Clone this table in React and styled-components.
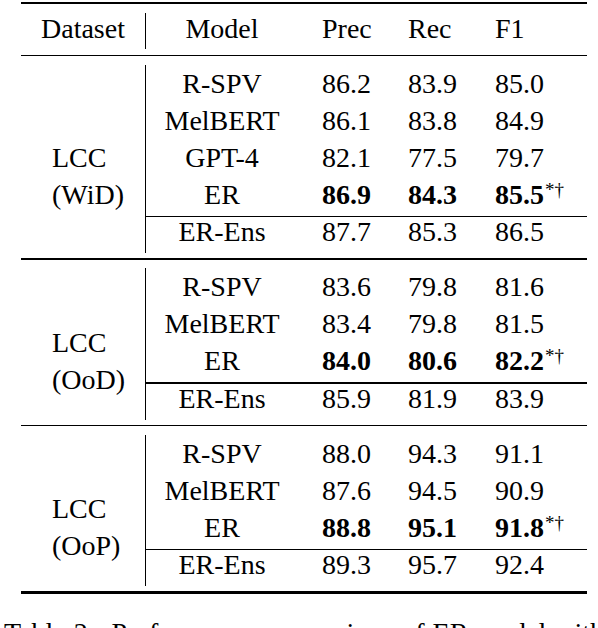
import React from "react";
import styled, { createGlobalStyle, css } from "styled-components";

const SERIF = `"Liberation Serif", Tinos, "Times New Roman", Times, serif`;

const serifText = css`
  font-family: ${SERIF};
  font-size: 28px;
  color: #000;
`;

const GlobalStyle = createGlobalStyle`
  html, body {
    margin: 0;
    padding: 0;
    overflow: hidden;
    background: #fff;
  }
  html body #root, html body #root * {
    font-family: ${SERIF};
  }
`;

const Page = styled.div`
  ${serifText};
  width: 598px;
  padding-top: 2px;
`;

const Table = styled.div`
  margin-left: 21px;
  width: 566px;
  display: flex;
  flex-direction: column;
`;

const Rule = styled.div`
  height: ${(p) => (p.$heavy ? "2.4px" : "1.5px")};
  background: #000;
`;

const Section = styled.div`
  display: grid;
  grid-template-columns: 125px 441px;
  padding: ${(p) => p.$top}px 0 ${(p) => p.$bottom}px;
`;

const LeftCell = styled.div`
  ${serifText};
  box-sizing: border-box;
  border-right: 1px solid #000;
`;

const HeaderLeft = styled(LeftCell)`
  line-height: 31px;
  padding-bottom: 5.6px;
  text-align: center;
`;

const LabelCell = styled(LeftCell)`
  padding-left: 31px;
  padding-top: ${(p) => p.$offset}px;
  line-height: 37px;
`;

const LabelLine = styled.div`
  ${serifText};
  white-space: nowrap;
`;

const Body = styled.div`
  display: flex;
  flex-direction: column;
  padding-bottom: ${(p) => p.$bottom || 0}px;
`;

const Row = styled.div`
  ${serifText};
  display: grid;
  grid-template-columns: 152px 86px 87px 116px;
  height: ${(p) => p.$lh + (p.$pb || 0)}px;
  line-height: ${(p) => p.$lh}px;
  padding-bottom: ${(p) => p.$pb || 0}px;
  box-sizing: border-box;
  white-space: nowrap;
`;

const ModelCell = styled.div`
  ${serifText};
  text-align: center;
`;

const NumCell = styled.div`
  ${serifText};
  padding-left: 24px;
`;

const Bold = styled.span`
  font-family: ${SERIF};
  font-weight: 700;
`;

const Sup = styled.span`
  font-family: ${SERIF};
  font-size: 19px;
  font-weight: 400;
  line-height: 0;
  vertical-align: 8px;
  margin-left: 1px;
`;

const CmidRule = styled.div`
  margin-top: 3px;
  height: 1.5px;
  background: #000;
`;

const Caption = styled.p`
  ${serifText};
  margin: 20px 0 0 4px;
  line-height: 37px;
  white-space: nowrap;
  word-spacing: 1px;
`;

const groups = [
  {
    label: ["LCC", "(WiD)"],
    offset: 74,
    rows: [
      ["R-SPV", "86.2", "83.9", "85.0"],
      ["MelBERT", "86.1", "83.8", "84.9"],
      ["GPT-4", "82.1", "77.5", "79.7"],
      ["ER", "86.9", "84.3", "85.5", true],
    ],
    ens: ["ER-Ens", "87.7", "85.3", "86.5"],
  },
  {
    label: ["LCC", "(OoD)"],
    offset: 55.5,
    rows: [
      ["R-SPV", "83.6", "79.8", "81.6"],
      ["MelBERT", "83.4", "79.8", "81.5"],
      ["ER", "84.0", "80.6", "82.2", true],
    ],
    ens: ["ER-Ens", "85.9", "81.9", "83.9"],
  },
  {
    label: ["LCC", "(OoP)"],
    offset: 55.5,
    rows: [
      ["R-SPV", "88.0", "94.3", "91.1"],
      ["MelBERT", "87.6", "94.5", "90.9"],
      ["ER", "88.8", "95.1", "91.8", true],
    ],
    ens: ["ER-Ens", "89.3", "95.7", "92.4"],
  },
];

function DataRow({ cells, lh }) {
  const [model, p, r, f, best] = cells;
  return (
    <Row $lh={lh}>
      <ModelCell>{model}</ModelCell>
      <NumCell>{best ? <Bold>{p}</Bold> : p}</NumCell>
      <NumCell>{best ? <Bold>{r}</Bold> : r}</NumCell>
      <NumCell>
        {best ? (
          <>
            <Bold>{f}</Bold>
            <Sup>*†</Sup>
          </>
        ) : (
          f
        )}
      </NumCell>
    </Row>
  );
}

export default function App() {
  return (
    <>
      <GlobalStyle />
      <Page>
        <Table>
          <Rule $heavy />
          <Section $top={8.3} $bottom={5.7}>
            <HeaderLeft>Dataset</HeaderLeft>
            <Row $lh={31} $pb={5.6}>
              <ModelCell>Model</ModelCell>
              <NumCell>Prec</NumCell>
              <NumCell>Rec</NumCell>
              <NumCell>F1</NumCell>
            </Row>
          </Section>
          {groups.map((g, gi) => (
            <React.Fragment key={gi}>
              <Rule />
              <Section $top={8.5} $bottom={5.2}>
                <LabelCell $offset={g.offset}>
                  {g.label.map((l) => (
                    <LabelLine key={l}>{l}</LabelLine>
                  ))}
                </LabelCell>
                <Body $bottom={6.3}>
                  {g.rows.map((r, ri) => (
                    <DataRow key={ri} cells={r} lh={37} />
                  ))}
                  <CmidRule />
                  <DataRow cells={g.ens} lh={29.5} />
                </Body>
              </Section>
            </React.Fragment>
          ))}
          <Rule $heavy />
        </Table>
        <Caption>Table 2:&nbsp; Performance comparison of ER model with</Caption>
      </Page>
    </>
  );
}
